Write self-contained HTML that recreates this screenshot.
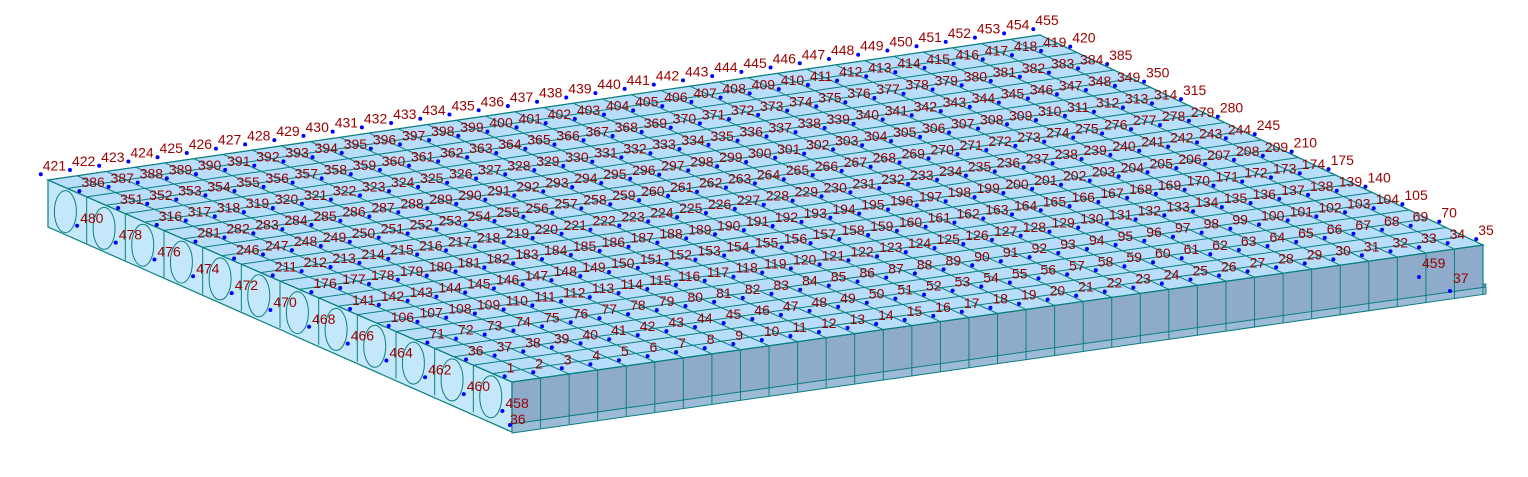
<!DOCTYPE html>
<html><head><meta charset="utf-8"><style>
html,body{margin:0;padding:0;background:#fff;width:1528px;height:477px;overflow:hidden}
svg{display:block}
text{font-family:"Liberation Sans",sans-serif;font-size:14px;fill:#9a0000}
</style></head><body>
<svg id="s" width="1528" height="477" xmlns="http://www.w3.org/2000/svg">
<polygon points="512,429 1483,292 1486,284 512,421" fill="#8fb0cf" stroke="#0a8080"/>
<polygon points="48,180 512,382 512,432 48,227" fill="#c4e8fa" stroke="#0a8080" stroke-width="1.2"/>
<polygon points="512,382 1483,245 1483,292 512,429" fill="#8fabcb" stroke="#0a8080" stroke-width="1.2"/>
<polygon points="512,424 1486,287 1486,294 512,433" fill="#9dbad6" stroke="#0a8080"/>
<polygon points="48,180 1040,35 1483,245 512,382" fill="#b8defc" stroke="#0a8080" stroke-width="1.2"/>
<g id="g"></g>
</svg>
<script>
var FL=[512,382],FR=[1483,245],BL=[48,180],BR=[1040,35];
function P(u,v){var a=FL[0]+(FR[0]-FL[0])*u,b=FL[1]+(FR[1]-FL[1])*u,c=BL[0]+(BR[0]-BL[0])*u,d=BL[1]+(BR[1]-BL[1])*u;return[a+(c-a)*v,b+(d-b)*v];}
var h='',NU=34,NV=12;
for(var i=0;i<=NU;i++){var u=i/NU;var a=P(u,0),b=P(u,1);h+='<line x1="'+a[0]+'" y1="'+a[1]+'" x2="'+b[0]+'" y2="'+b[1]+'" stroke="#0a8080" stroke-width="1"/>';}
for(var j=0;j<=NV*2;j++){var v=j/(NV*2);var a=P(0,v),b=P(1,v);h+='<line x1="'+a[0]+'" y1="'+a[1]+'" x2="'+b[0]+'" y2="'+b[1]+'" stroke="#0a8080" stroke-width="1"/>';}
for(var i=0;i<=NU;i++){var a=P(i/NU,0);h+='<line x1="'+a[0]+'" y1="'+a[1]+'" x2="'+a[0]+'" y2="'+(a[1]+50)+'" stroke="#0a8080"/>';}
for(var j=0;j<=NV;j++){var a=P(0,j/NV);h+='<line x1="'+a[0]+'" y1="'+a[1]+'" x2="'+a[0]+'" y2="'+(a[1]+47)+'" stroke="#0a8080"/>';
 if(j<NV){var b=P(0,(j+0.55)/NV);h+='<ellipse cx="'+(b[0])+'" cy="'+(b[1]+24)+'" rx="11" ry="21" fill="'+(j==NV-1?'#c4e8fa':'none')+'" stroke="#0a8080"/>';}}
for(var j=0;j<=NV;j++)for(var i=0;i<=NU;i++){var a=P((i+0.15)/NU,(j+0.3)/NV);var n=1+j*35+i;if(n>457)continue;
 h+='<circle cx="'+a[0]+'" cy="'+a[1]+'" r="2" fill="#0000ff"/><text x="'+(a[0]+2)+'" y="'+(a[1]-4)+'">'+n+'</text>';}
for(var j=0;j<12;j++){var a=P(0,(j+0.3)/NV);var n=458+2*j;h+='<circle cx="'+(a[0]+2)+'" cy="'+(a[1]+34)+'" r="2" fill="#0000ff"/><text x="'+(a[0]+5)+'" y="'+(a[1]+31)+'">'+n+'</text>';}
h+='<circle cx="1419" cy="277" r="2" fill="#0000ff"/><text x="1422" y="268">459</text><circle cx="1450" cy="291" r="2" fill="#0000ff"/><text x="1453" y="283">37</text>';
h+='<circle cx="510" cy="425" r="2" fill="#0000ff"/><text x="510" y="424">36</text>';
document.getElementById('g').innerHTML=h;
</script>
</body></html>
